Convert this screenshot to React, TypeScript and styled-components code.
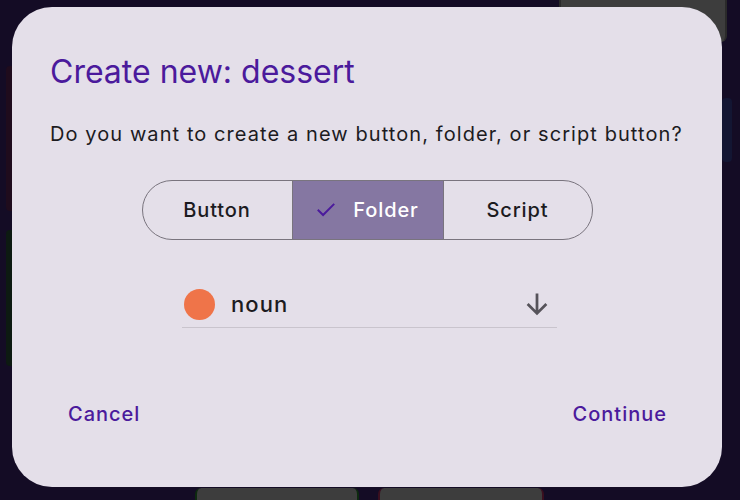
import React from 'react';
import styled, { createGlobalStyle } from 'styled-components';

const GlobalStyle = createGlobalStyle`
  html, body {
    margin: 0;
    padding: 0;
    background: #140c25;
  }
  body {
    font-family: Inter, Roboto, "Liberation Sans", sans-serif;
  }
`;

const Stage = styled.div`
  position: relative;
  width: 740px;
  height: 500px;
  overflow: hidden;
  background: #140c25;
`;

// tiles of the app lying behind the modal
const Tile = styled.div<{ $edge: string }>`
  position: absolute;
  background: #3d3d3d;
  border-left: 2px solid ${(p) => p.$edge};
  border-right: 2px solid ${(p) => p.$edge};
  border-radius: 6px;
`;

const SideGlow = styled.div<{ $tint: string }>`
  position: absolute;
  width: 10px;
  border-radius: 4px;
  background: ${(p) => p.$tint};
`;

const Dialog = styled.div`
  position: absolute;
  left: 12px;
  top: 7px;
  width: 710px;
  height: 480px;
  box-sizing: border-box;
  border-radius: 40px;
  background: #e4dfe9;
  padding: 45px 38px 61px 38px;
  display: flex;
  flex-direction: column;
`;

const Title = styled.h1`
  margin: 0;
  font-size: 32px;
  font-weight: 400;
  line-height: 40px;
  color: #4b1a9c;
  letter-spacing: 0;
`;

const Message = styled.p`
  margin: 29px 0 0;
  font-size: 20px;
  line-height: 26px;
  letter-spacing: 1.08px;
  color: #1c1b1f;
`;

const Segmented = styled.div`
  align-self: center;
  margin-top: 33px;
  display: grid;
  grid-template-columns: 149px 151px 149px;
  height: 60px;
  box-sizing: border-box;
  border: 1px solid #79747e;
  border-radius: 30px;
  overflow: hidden;
`;

const Segment = styled.div<{ $selected?: boolean }>`
  display: flex;
  align-items: center;
  justify-content: center;
  gap: 17px;
  font-size: 20px;
  font-weight: 500;
  letter-spacing: 0.9px;
  color: ${(p) => (p.$selected ? '#ffffff' : '#1c1b1f')};
  background: ${(p) => (p.$selected ? '#8577a2' : 'transparent')};
  & + & {
    border-left: 1px solid #79747e;
  }
`;

const DropdownRow = styled.div`
  align-self: center;
  margin-top: 41px;
  width: 375px;
  height: 47px;
  box-sizing: border-box;
  padding: 0 5px 0 2px;
  display: flex;
  align-items: center;
  gap: 16px;
  border-bottom: 1px solid #c9c4cd;
  margin-left: 5px;
`;

const Dot = styled.span<{ $color: string }>`
  width: 31px;
  height: 31px;
  border-radius: 50%;
  background: ${(p) => p.$color};
  flex: none;
`;

const DropLabel = styled.span`
  flex: 1;
  font-size: 22px;
  font-weight: 500;
  color: #1c1b1f;
  letter-spacing: 1.1px;
`;

const Actions = styled.div`
  margin-top: auto;
  display: flex;
  justify-content: space-between;
  padding: 0 17px 0 18px;
`;

const TextButton = styled.button`
  background: none;
  border: none;
  padding: 0;
  font-family: inherit;
  font-size: 20px;
  font-weight: 500;
  letter-spacing: 1px;
  color: #4b1a9c;
`;

const Check = () => (
  <svg width="20" height="20" viewBox="0 0 24 24" fill="none">
    <path d="M3 12.5l5.5 5.5L21 5.5" stroke="#4b1a9c" strokeWidth="2.4" strokeLinecap="square" />
  </svg>
);

const ArrowDown = () => (
  <svg width="30" height="30" viewBox="0 0 24 24" fill="none">
    <path d="M12 3.5v16M4.5 12l7.5 7.5 7.5-7.5" stroke="#56535a" strokeWidth="2.2" />
  </svg>
);

export default function App() {
  return (
    <Stage>
      <GlobalStyle />
      <Tile $edge="#2a2a2a" style={{ left: 559, top: -10, width: 164, height: 52 }} />
      <Tile $edge="#0d2a0f" style={{ left: 195, top: 488, width: 160, height: 30 }} />
      <Tile $edge="#3a0f1f" style={{ left: 378, top: 488, width: 162, height: 30 }} />
      <SideGlow $tint="#1f0c1d" style={{ left: 6, top: 66, height: 145 }} />
      <SideGlow $tint="#0d1a12" style={{ left: 6, top: 230, height: 136 }} />
      <SideGlow $tint="#131633" style={{ left: 722, top: 98, height: 64 }} />
      <Dialog>
        <Title>Create new: dessert</Title>
        <Message>Do you want to create a new button, folder, or script button?</Message>
        <Segmented>
          <Segment>Button</Segment>
          <Segment $selected>
            <Check />
            Folder
          </Segment>
          <Segment>Script</Segment>
        </Segmented>
        <DropdownRow>
          <Dot $color="#ef7449" />
          <DropLabel>noun</DropLabel>
          <ArrowDown />
        </DropdownRow>
        <Actions>
          <TextButton>Cancel</TextButton>
          <TextButton>Continue</TextButton>
        </Actions>
      </Dialog>
    </Stage>
  );
}
